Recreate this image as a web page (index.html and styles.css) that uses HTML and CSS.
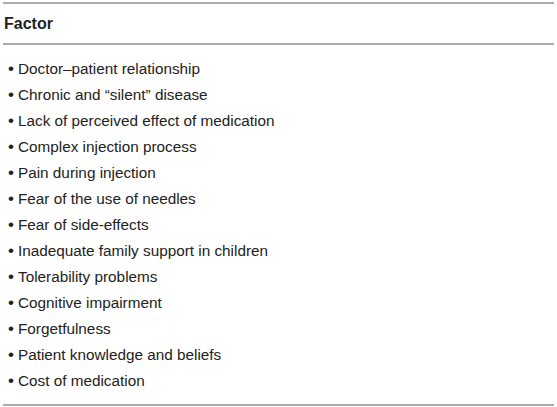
FILE: index.html
```html
<!DOCTYPE html>
<html>
<head>
<meta charset="utf-8">
<link rel="stylesheet" href="styles.css">
</head>
<body>
<div class="table">
  <div class="head">Factor</div>
  <ul class="list">
    <li>Doctor–patient relationship</li>
    <li>Chronic and “silent” disease</li>
    <li>Lack of perceived effect of medication</li>
    <li>Complex injection process</li>
    <li>Pain during injection</li>
    <li>Fear of the use of needles</li>
    <li>Fear of side-effects</li>
    <li>Inadequate family support in children</li>
    <li>Tolerability problems</li>
    <li>Cognitive impairment</li>
    <li>Forgetfulness</li>
    <li>Patient knowledge and beliefs</li>
    <li>Cost of medication</li>
  </ul>
</div>
</body>
</html>
```

FILE: styles.css
```css
html, body {
  margin: 0;
  padding: 0;
  background: #fff;
}
body {
  padding: 2px 3px 0 3px;
  font-family: "Liberation Sans", Arial, sans-serif;
  color: #222;
}
.table {
  width: 551px;
  border-top: 2px solid #aaa;
  border-bottom: 2px solid #aaa;
}
.head {
  height: 39px;
  display: flex;
  align-items: center;
  font-weight: bold;
  font-size: 16px;
  padding-left: 1px;
  border-bottom: 2px solid #aaa;
}
.list {
  list-style: none;
  margin: 0;
  padding: 11px 0 10px 0;
}
.list li {
  height: 26px;
  display: flex;
  align-items: center;
  font-size: 15.3px;
}
.list li::before {
  content: "•";
  width: 15px;
  padding-left: 5px;
  box-sizing: border-box;
  font-size: 17px;
}
```
